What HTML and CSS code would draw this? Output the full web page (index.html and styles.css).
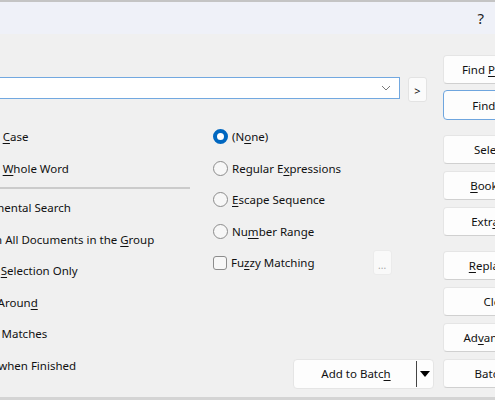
FILE: index.html
```html
<!DOCTYPE html>
<html>
	<head>
		<meta charset="UTF-8">
		<title>Find</title>
		<link rel="stylesheet" href="styles.css">
	</head>
	<body>
		<div class="titlebar">
			<span class="help">?</span>
		</div>
		<div class="main">
			<div class="left">
				<div class="findRow">
					<div class="combo">
						<svg class="chev" width="10" height="6" viewBox="0 0 10 6"><path d="M1 1 L5 5 L9 1" fill="none" stroke="#7a7a7a" stroke-width="1"/></svg>
					</div>
					<div class="smallBtn">&gt;</div>
				</div>
				<div class="options">
					<div class="col1">
						<div class="opt"><span class="check"></span><span>Match <u>C</u>ase</span></div>
						<div class="opt"><span class="check"></span><span>Match <u>W</u>hole Word</span></div>
						<div class="sep"></div>
						<div class="opt"><span class="check"></span><span>Incremental Search</span></div>
						<div class="opt"><span class="check"></span><span>Find in All Documents in the <u>G</u>roup</span></div>
						<div class="opt"><span class="check"></span><span>In the <u>S</u>election Only</span></div>
						<div class="opt"><span class="check"></span><span>Wrap Aroun<u>d</u></span></div>
						<div class="opt"><span class="check"></span><span>Count Matches</span></div>
						<div class="opt"><span class="check"></span><span>Close when Finished</span></div>
					</div>
					<div class="col2">
						<div class="opt"><span class="radio on"></span><span>(N<u>o</u>ne)</span></div>
						<div class="opt"><span class="radio"></span><span>Regular E<u>x</u>pressions</span></div>
						<div class="opt"><span class="radio"></span><span><u>E</u>scape Sequence</span></div>
						<div class="opt"><span class="radio"></span><span>Nu<u>m</u>ber Range</span></div>
						<div class="opt"><span class="check"></span><span>Fu<u>z</u>zy Matching</span><span class="dots">...</span></div>
						<div class="batchBtn">
							<span class="batchText">Add to Batc<u>h</u></span>
							<span class="batchDrop"><svg width="10" height="6" viewBox="0 0 10 6"><path d="M0 0 L10 0 L5 6 Z" fill="#000"/></svg></span>
						</div>
					</div>
				</div>
			</div>
			<div class="buttons">
				<div class="btn"><span>Find <u>P</u>revious</span></div>
				<div class="btn def"><span>Find Next</span></div>
				<div class="btn gap"><span>Select All</span></div>
				<div class="btn"><span><u>B</u>ookmark</span></div>
				<div class="btn"><span>Extr<u>a</u>ct All</span></div>
				<div class="btn gap"><span><u>R</u>eplace All</span></div>
				<div class="btn"><span>Close</span></div>
				<div class="btn"><span>Ad<u>v</u>anced &gt;&gt;</span></div>
				<div class="btn"><span>Batch &gt;&gt;</span></div>
			</div>
		</div>
	</body>
</html>
```

FILE: styles.css
```css
*{
	margin: 0;
	padding: 0;
	box-sizing: border-box;
}
html, body{
	width: 495px;
	height: 400px;
	overflow: hidden;
}
body{
	background-color: #f0f0f0;
	font-family: "Segoe UI", "Noto Sans", sans-serif;
	font-size: 11.5px;
	color: #111;
	border-bottom: 3px solid #d4d4d4;
}
u{
	text-underline-offset: 2px;
}
.titlebar{
	height: 34px;
	border-top: 2px solid #c4c4c4;
	background-color: #eff1f8;
	display: flex;
	align-items: center;
	justify-content: flex-end;
	padding-right: 11px;
}
.help{
	font-size: 15px;
	color: #222;
}
.main{
	display: flex;
}
.left{
	width: 443px;
	flex-shrink: 0;
	padding-top: 43px;
	padding-right: 9px;
}
.findRow{
	display: flex;
	align-items: flex-start;
	gap: 8px;
	height: 25px;
}
.combo{
	width: 400px;
	height: 22px;
	background-color: #fff;
	border: 1px solid #72a8e0;
	border-left: none;
	display: flex;
	align-items: center;
	justify-content: flex-end;
	padding-right: 8px;
}
.smallBtn{
	width: 19px;
	height: 25px;
	background-color: #fbfbfb;
	border: 1px solid #e3e3e3;
	border-radius: 3px;
	font-size: 11px;
	display: flex;
	align-items: center;
	justify-content: center;
	padding-top: 2px;
}
.options{
	display: flex;
	margin-top: 19px;
	gap: 23px;
}
.col1{
	width: 246px;
	margin-left: -56px;
}
.col2{
	flex: 1;
	display: flex;
	flex-direction: column;
}
.opt{
	height: 31.5px;
	display: flex;
	align-items: center;
	white-space: nowrap;
}
.check{
	width: 14px;
	height: 14px;
	border: 1px solid #8c8c8c;
	border-radius: 3px;
	background-color: #f7f7f7;
	margin-right: 4px;
	flex-shrink: 0;
}
.col1 .check{
	margin-right: 8px;
}
.radio{
	width: 15px;
	height: 15px;
	border: 1px solid #8c8c8c;
	border-radius: 50%;
	background-color: #f7f7f7;
	margin-right: 4px;
	flex-shrink: 0;
}
.radio.on{
	border: 4px solid #0067c0;
	background-color: #fff;
}
.sep{
	height: 2px;
	background-color: #cbcbcb;
	margin: 3px 0 3px 0;
}
.dots{
	width: 19px;
	height: 25px;
	margin-left: 58px;
	background-color: #f9f9f9;
	border: 1px solid #ebebeb;
	border-radius: 3px;
	color: #a8a8a8;
	font-size: 10px;
	display: flex;
	align-items: center;
	justify-content: center;
	padding-top: 4px;
}
.batchBtn{
	margin-top: 80px;
	margin-left: auto;
	width: 141px;
	height: 30px;
	background-color: #fdfdfd;
	border: 1px solid #e5e5e5;
	border-radius: 4px;
	display: flex;
	align-items: center;
}
.batchText{
	flex: 1;
	text-align: center;
	padding-left: 2px;
}
.batchDrop{
	width: 17px;
	height: 26px;
	border-left: 1px solid #444;
	display: flex;
	align-items: center;
	justify-content: center;
}
.buttons{
	display: flex;
	flex-direction: column;
	padding-top: 21px;
	gap: 7px;
}
.btn{
	width: 110px;
	height: 29px;
	flex-shrink: 0;
	background-color: #fdfdfd;
	border: 1px solid #e5e5e5;
	border-bottom-color: #d0d0d0;
	border-radius: 4px;
	display: flex;
	align-items: center;
	justify-content: center;
	white-space: nowrap;
}
.btn.def{
	height: 30px;
	margin-top: -1px;
	border: 1px solid #6ea5de;
}
.btn.gap{
	margin-top: 8px;
}
```
